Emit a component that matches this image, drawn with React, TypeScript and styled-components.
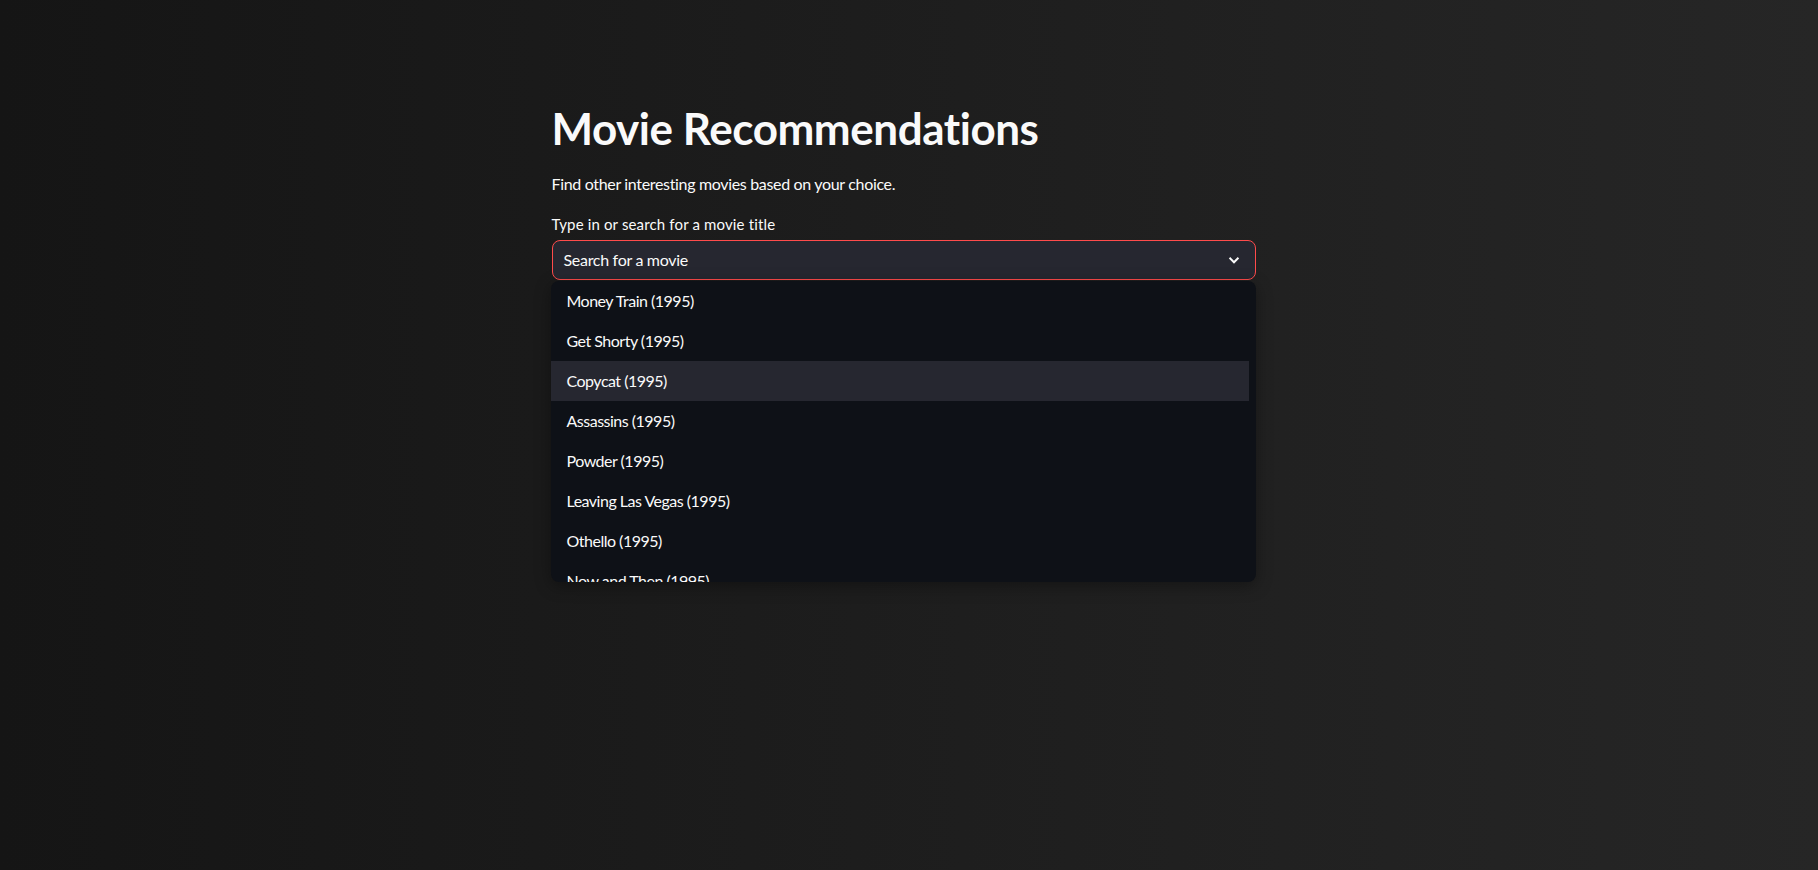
import React, { useState } from 'react';
import styled, { createGlobalStyle } from 'styled-components';

const GlobalStyle = createGlobalStyle`
  html, body {
    margin: 0;
    padding: 0;
    height: 100%;
  }
  body {
    font-family: 'Lato', 'Noto Sans', sans-serif;
    color: #fafafa;
    background: linear-gradient(90deg, #151515 0%, #262626 100%);
    -webkit-font-smoothing: antialiased;
  }
`;

const Page = styled.div`
  min-height: 870px;
  padding: 102px 11px 0 0;
  box-sizing: border-box;
  display: flex;
  justify-content: center;
`;

const Main = styled.main`
  width: 704px;
  display: flex;
  flex-direction: column;
`;

const Title = styled.h1`
  margin: 0;
  font-size: 44px;
  font-weight: 700;
  line-height: 1.2;
  letter-spacing: -0.45px;
  color: #fafafa;
`;

const Lead = styled.p`
  margin: 16px 0 0;
  font-size: 16px;
  line-height: 1.6;
  letter-spacing: -0.33px;
`;

const Label = styled.label`
  display: block;
  margin-top: 17px;
  font-size: 15px;
  line-height: 1.5;
  letter-spacing: 0.15px;
  color: #fafafa;
`;

const SelectWrap = styled.div`
  position: relative;
  margin-top: 4px;
`;

const SelectBox = styled.div`
  height: 40px;
  box-sizing: border-box;
  border: 1px solid #ff4b4b;
  border-radius: 8px;
  background: #262730;
  display: flex;
  align-items: center;
  justify-content: space-between;
  padding: 0 12px 0 11px;
  font-size: 16px;
  letter-spacing: -0.3px;
  cursor: pointer;
`;

const Placeholder = styled.span`
  color: #fafafa;
`;

const Chevron = styled.svg`
  width: 18px;
  height: 18px;
  flex: none;
`;

const Menu = styled.ul`
  position: absolute;
  top: 41px;
  left: -1px;
  right: 0;
  margin: 0;
  padding: 0 7px 0 0;
  list-style: none;
  height: 301px;
  overflow: hidden;
  background: #0e1117;
  border-radius: 8px;
  box-shadow: 0 4px 16px rgba(0, 0, 0, 0.35);
  z-index: 10;
`;

const Option = styled.li<{ $active?: boolean }>`
  height: 40px;
  display: flex;
  align-items: center;
  padding-left: 16px;
  font-size: 16px;
  letter-spacing: -0.5px;
  color: #fafafa;
  background: ${(p) => (p.$active ? '#262730' : 'transparent')};
  cursor: pointer;
`;

const movies = [
  'Money Train (1995)',
  'Get Shorty (1995)',
  'Copycat (1995)',
  'Assassins (1995)',
  'Powder (1995)',
  'Leaving Las Vegas (1995)',
  'Othello (1995)',
  'Now and Then (1995)',
];

const App: React.FC = () => {
  const [hovered, setHovered] = useState<number>(2);

  return (
    <>
      <GlobalStyle />
      <Page>
        <Main>
          <Title>Movie Recommendations</Title>
          <Lead>Find other interesting movies based on your choice.</Lead>
          <Label>Type in or search for a movie title</Label>
          <SelectWrap>
            <SelectBox>
              <Placeholder>Search for a movie</Placeholder>
              <Chevron viewBox="0 0 24 24" fill="none" stroke="#fafafa" strokeWidth="2.6" strokeLinecap="square">
                <polyline points="7,10 12,15 17,10" />
              </Chevron>
            </SelectBox>
            <Menu>
              {movies.map((m, i) => (
                <Option key={m} $active={i === hovered} onMouseEnter={() => setHovered(i)}>
                  {m}
                </Option>
              ))}
            </Menu>
          </SelectWrap>
        </Main>
      </Page>
    </>
  );
};

export default App;
